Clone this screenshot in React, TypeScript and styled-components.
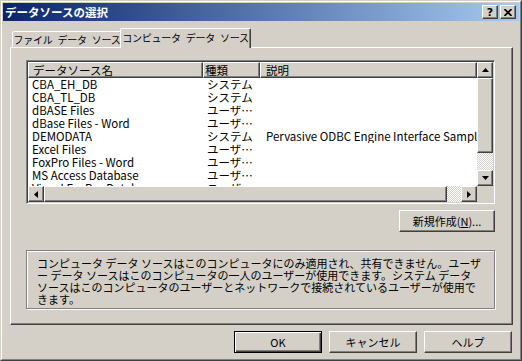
import React from "react";
import styled, { createGlobalStyle } from "styled-components";

const face = `"Noto Sans CJK JP", "Noto Sans", sans-serif`;

const GlobalStyle = createGlobalStyle`
  html, body { margin: 0; padding: 0; background: #d4d0c8; }
  body { font-family: ${face}; font-size: 11px; color: #000; }
  * { box-sizing: border-box; }
`;

const raised = `
  border: 1px solid;
  border-color: #fff #404040 #404040 #fff;
  box-shadow: inset -1px -1px #808080;
  background: #d4d0c8;
`;

const SWindow = styled.div`
  width: 522px;
  height: 361px;
  border: 1px solid;
  border-color: #d4d0c8 #404040 #404040 #d4d0c8;
  background: #d4d0c8;
`;

const SFrame = styled.div`
  height: 100%;
  border: 1px solid;
  border-color: #fff #808080 #808080 #fff;
  padding: 1px;
  display: flex;
  flex-direction: column;
`;

const STitleBar = styled.div`
  flex: none;
  height: 18px;
  display: flex;
  align-items: center;
  padding: 0 3px 0 2px;
  background: linear-gradient(to right, #0a246a, #a6caf0);
`;

const STitle = styled.span`
  flex: 1;
  color: #fff;
  font-weight: bold;
  font-size: 11.5px;
  line-height: 18px;
`;

const SCaptionButton = styled.button<{ $gap?: number }>`
  ${raised}
  width: 16px;
  height: 14px;
  padding: 0;
  margin-left: ${(p) => p.$gap ?? 0}px;
  display: flex;
  align-items: center;
  justify-content: center;
  font: bold 11px "DejaVu Sans", sans-serif;
  line-height: 1;
  color: #000;
`;

const SBody = styled.div`
  flex: 1;
  display: flex;
  flex-direction: column;
  padding: 7px 6px 0 7px;
`;

const STabStrip = styled.div`
  height: 19px;
  display: flex;
  align-items: flex-end;
  padding-left: 2px;
`;

const STab = styled.div<{ $active?: boolean; $width: number }>`
  position: relative;
  flex: none;
  width: ${(p) => p.$width}px;
  height: ${(p) => (p.$active ? 20 : 16)}px;
  margin-bottom: ${(p) => (p.$active ? -1 : 0)}px;
  margin-left: ${(p) => (p.$active ? -2 : 0)}px;
  z-index: ${(p) => (p.$active ? 1 : 0)};
  border: 1px solid;
  border-bottom: none;
  border-color: #fff #404040 transparent #fff;
  border-radius: 2px 2px 0 0;
  box-shadow: inset -1px 0 #808080;
  background: #d4d0c8;
  display: flex;
  justify-content: center;
  padding-top: ${(p) => (p.$active ? 2 : 1)}px;
  font-size: 10px;
  line-height: 13px;
  letter-spacing: -0.2px;
  white-space: nowrap;
`;

const SPanel = styled.div`
  flex: none;
  height: 278px;
  border: 1px solid;
  border-color: #fff #404040 #404040 #fff;
  box-shadow: inset -1px -1px #808080;
  padding: 12px 0 0 15px;
  display: flex;
  flex-direction: column;
`;

const SList = styled.div`
  width: 469px;
  height: 144px;
  border: 1px solid;
  border-color: #808080 #fff #fff #808080;
  box-shadow: inset 1px 1px #404040, inset -1px -1px #d4d0c8;
  padding: 1px;
  background: #fff;
  display: grid;
  grid-template-columns: 1fr 16px;
  grid-template-rows: 1fr 16px;
  font-size: 11.5px;
`;

const SListBody = styled.div`
  overflow: hidden;
  display: flex;
  flex-direction: column;
`;

const SHeader = styled.div`
  flex: none;
  display: grid;
  grid-template-columns: 175px 57px 217px;
  height: 16px;
`;

const SHeadCell = styled.div<{ $pad: number }>`
  ${raised}
  padding-left: ${(p) => p.$pad}px;
  line-height: 14px;
  white-space: nowrap;
  overflow: hidden;
`;

const SRow = styled.div`
  flex: none;
  display: grid;
  grid-template-columns: 175px 57px 280px;
  height: 13px;
  line-height: 13px;
`;

const SCell = styled.div<{ $pad: number }>`
  padding-left: ${(p) => p.$pad}px;
  white-space: nowrap;
  overflow: hidden;
`;

const SScrollV = styled.div`
  display: flex;
  flex-direction: column;
`;

const SScrollH = styled.div`
  display: flex;
`;

const SScrollBtn = styled.div`
  ${raised}
  flex: none;
  width: 16px;
  height: 16px;
  display: flex;
  align-items: center;
  justify-content: center;
`;

const SThumb = styled.div<{ $size: number; $vertical?: boolean }>`
  ${raised}
  flex: none;
  ${(p) => (p.$vertical ? `height: ${p.$size}px;` : `width: ${p.$size}px;`)}
`;

const STrack = styled.div`
  flex: 1;
  background: repeating-conic-gradient(#fff 0% 25%, #d4d0c8 0% 50%) 0 0 / 2px 2px;
`;

const SCorner = styled.div`
  background: #d4d0c8;
`;

const SNewRow = styled.div`
  width: 469px;
  display: flex;
  justify-content: flex-end;
  margin-top: 6px;
`;

const SButton = styled.button<{ $default?: boolean; $width: number }>`
  width: ${(p) => p.$width}px;
  height: 22px;
  padding: 0;
  font-family: ${face};
  font-size: 11px;
  color: #000;
  background: #d4d0c8;
  border: 1px solid;
  border-color: ${(p) => (p.$default ? "#000" : "#fff #404040 #404040 #fff")};
  box-shadow: ${(p) =>
    p.$default
      ? "inset 1px 1px #fff, inset -1px -1px #404040, inset -2px -2px #808080"
      : "inset -1px -1px #808080"};
  line-height: 18px;
  u { text-decoration: underline; text-underline-offset: 1px; }
`;

const SInfo = styled.div`
  width: 469px;
  height: 59px;
  margin-top: 18px;
  border: 1px solid #808080;
  box-shadow: 1px 1px #fff, inset 1px 1px #fff;
  padding: 6px 0 0 10px;
`;

const SInfoLine = styled.div`
  height: 12px;
  line-height: 12px;
  white-space: nowrap;
`;

const SFooter = styled.div`
  display: flex;
  justify-content: flex-end;
  gap: 7px;
  padding-right: 1px;
  margin-top: 6px;
`;

const Arrow = ({ dir }: { dir: "up" | "down" | "left" | "right" }) => {
  const horiz = dir === "left" || dir === "right";
  const pts = {
    up: "3.5,0 7,4 0,4",
    down: "0,0 7,0 3.5,4",
    left: "4,0 4,7 0,3.5",
    right: "0,0 0,7 4,3.5",
  }[dir];
  return (
    <svg width={horiz ? 4 : 7} height={horiz ? 7 : 4} viewBox={horiz ? "0 0 4 7" : "0 0 7 4"}>
      <polygon points={pts} fill="#000" />
    </svg>
  );
};

const rows = [
  ["CBA_EH_DB", "システム", ""],
  ["CBA_TL_DB", "システム", ""],
  ["dBASE Files", "ユーザ…", ""],
  ["dBase Files - Word", "ユーザ…", ""],
  ["DEMODATA", "システム", "Pervasive ODBC Engine Interface Sample"],
  ["Excel Files", "ユーザ…", ""],
  ["FoxPro Files - Word", "ユーザ…", ""],
  ["MS Access Database", "ユーザ…", ""],
  ["Visual FoxPro Database", "ユーザ…", ""],
];

const info = [
  "コンピュータ データ ソースはこのコンピュータにのみ適用され、共有できません。ユーザ",
  "ー データ ソースはこのコンピュータの一人のユーザーが使用できます。システム データ",
  "ソースはこのコンピュータのユーザーとネットワークで接続されているユーザーが使用で",
  "きます。",
];

const App = () => {
  return (
    <>
      <GlobalStyle />
      <SWindow>
        <SFrame>
          <STitleBar>
            <STitle>データソースの選択</STitle>
            <SCaptionButton>?</SCaptionButton>
            <SCaptionButton $gap={2}>
              <svg width="8" height="7" viewBox="0 0 8 7">
                <path d="M0.5 0 L7.5 7 M7.5 0 L0.5 7" stroke="#000" strokeWidth="1.6" />
              </svg>
            </SCaptionButton>
          </STitleBar>
          <SBody>
            <STabStrip>
              <STab $width={110}>ファイル{"\u2002"}データ{"\u2002"}ソース</STab>
              <STab $width={131} $active>
                コンピュータ{"\u2002"}データ{"\u2002"}ソース
              </STab>
            </STabStrip>
            <SPanel>
              <SList>
                <SListBody>
                  <SHeader>
                    <SHeadCell $pad={4}>データソース名</SHeadCell>
                    <SHeadCell $pad={1}>種類</SHeadCell>
                    <SHeadCell $pad={5}>説明</SHeadCell>
                  </SHeader>
                  {rows.map(([name, kind, desc]) => (
                    <SRow key={name}>
                      <SCell $pad={4}>{name}</SCell>
                      <SCell $pad={4}>{kind}</SCell>
                      <SCell $pad={6}>{desc}</SCell>
                    </SRow>
                  ))}
                </SListBody>
                <SScrollV>
                  <SScrollBtn>
                    <Arrow dir="up" />
                  </SScrollBtn>
                  <SThumb $vertical $size={75} />
                  <STrack />
                  <SScrollBtn>
                    <Arrow dir="down" />
                  </SScrollBtn>
                </SScrollV>
                <SScrollH>
                  <SScrollBtn>
                    <Arrow dir="left" />
                  </SScrollBtn>
                  <SThumb $size={403} />
                  <STrack />
                  <SScrollBtn>
                    <Arrow dir="right" />
                  </SScrollBtn>
                </SScrollH>
                <SCorner />
              </SList>
              <SNewRow>
                <SButton $width={96}>
                  新規作成(<u>N</u>)...
                </SButton>
              </SNewRow>
              <SInfo>
                {info.map((line) => (
                  <SInfoLine key={line}>{line}</SInfoLine>
                ))}
              </SInfo>
            </SPanel>
            <SFooter>
              <SButton $width={88} $default>
                OK
              </SButton>
              <SButton $width={88}>キャンセル</SButton>
              <SButton $width={88}>ヘルプ</SButton>
            </SFooter>
          </SBody>
        </SFrame>
      </SWindow>
    </>
  );
};

export default App;
